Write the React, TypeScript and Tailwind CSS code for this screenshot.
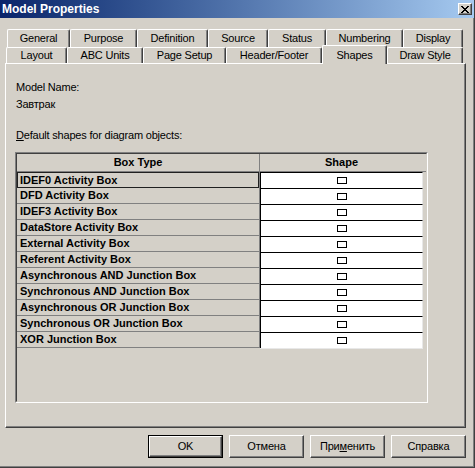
import React from 'react';

const row1 = [
  { label: 'General', w: 63 },
  { label: 'Purpose', w: 67 },
  { label: 'Definition', w: 71 },
  { label: 'Source', w: 60 },
  { label: 'Status', w: 58 },
  { label: 'Numbering', w: 77 },
  { label: 'Display', w: 60 },
];

const row2 = [
  { label: 'Layout', w: 61 },
  { label: 'ABC Units', w: 76 },
  { label: 'Page Setup', w: 83 },
  { label: 'Header/Footer', w: 96 },
  { label: 'Shapes', w: 65, selected: true },
  { label: 'Draw Style', w: 76 },
];

const boxTypes = [
  'IDEF0 Activity Box',
  'DFD Activity Box',
  'IDEF3 Activity Box',
  'DataStore Activity Box',
  'External Activity Box',
  'Referent Activity Box',
  'Asynchronous AND Junction Box',
  'Synchronous AND Junction Box',
  'Asynchronous OR Junction Box',
  'Synchronous OR Junction Box',
  'XOR Junction Box',
];

function Tab({ label, w, selected, h }: { label: string; w: number; selected?: boolean; h: number }) {
  if (selected) {
    return (
      <div
        className="relative z-10 -mt-[2px] h-[19px] flex items-start justify-center pt-[1px] bg-[#d4d0c8] border-t border-l border-white border-r border-r-[#404040] shadow-[inset_-1px_0_#808080] rounded-t-[2px]"
        style={{ width: w }}
      >
        {label}
      </div>
    );
  }
  return (
    <div
      className="flex items-center justify-center bg-[#d4d0c8] border-t border-l border-white border-r border-r-[#404040] shadow-[inset_-1px_0_#808080] rounded-t-[2px]"
      style={{ width: w, height: h }}
    >
      {label}
    </div>
  );
}

function Button({ children, isDefault }: { children: React.ReactNode; isDefault?: boolean }) {
  return (
    <div className={`w-[75px] h-[23px] ${isDefault ? 'border border-black' : ''}`}>
      <div className="w-full h-full flex items-center justify-center border-t border-l border-white border-r border-b border-r-[#404040] border-b-[#404040] shadow-[inset_-1px_-1px_#808080]">
        {children}
      </div>
    </div>
  );
}

export default function App() {
  return (
    <div className="w-[475px] h-[468px] bg-[#d4d0c8] flex flex-col border-r border-b border-[#404040] font-['Liberation_Sans',Arial,sans-serif] text-[11px] tracking-[-0.2px] text-black">
      {/* title bar */}
      <div className="h-[18px] shrink-0 flex items-center justify-between pl-[2px] pr-[2px] bg-linear-to-r from-[#0a246a] to-[#a6caf0]">
        <span className="text-white font-bold text-[12px] leading-none tracking-normal">Model Properties</span>
        <div className="w-[14px] h-[12px] flex items-center justify-center bg-[#d4d0c8] border-t border-l border-white border-r border-b border-r-[#404040] border-b-[#404040] shadow-[inset_-1px_-1px_#808080]">
          <svg width="8" height="7" viewBox="0 0 8 7" shapeRendering="crispEdges">
            <path d="M0 0h2v1h-2zM6 0h2v1h-2zM1 1h2v1h-2zM5 1h2v1h-2zM2 2h4v1h-4zM3 3h2v1h-2zM2 4h4v1h-4zM1 5h2v1h-2zM5 5h2v1h-2zM0 6h2v1h-2zM6 6h2v1h-2z" fill="#000" />
          </svg>
        </div>
      </div>

      <div className="flex-1 flex flex-col border-r border-b border-[#808080]">
        {/* tabs */}
        <div className="pt-[11px]">
          <div className="flex pl-[7px] h-[18px]">
            {row1.map((t) => (
              <Tab key={t.label} label={t.label} w={t.w} h={18} />
            ))}
          </div>
          <div className="flex pl-[6px] h-[16px]">
            {row2.map((t) => (
              <Tab key={t.label} label={t.label} w={t.w} selected={t.selected} h={16} />
            ))}
          </div>
        </div>

        {/* panel */}
        <div className="ml-[5px] w-[461px] h-[365px] border-t border-l border-white border-r border-b border-r-[#404040] border-b-[#404040] shadow-[inset_-1px_-1px_#808080]">
          <div className="ml-[10px] mt-[17px] leading-[13px]">Model Name:</div>
          <div className="ml-[10px] mt-[4px] leading-[13px]">Завтрак</div>
          <div className="ml-[10px] mt-[18px] leading-[13px]">
            <span className="underline">D</span>efault shapes for diagram objects:
          </div>

          {/* grid */}
          <div className="ml-[9px] mt-[10px] w-[413px] h-[251px] border-t border-l border-[#808080] border-r border-b border-r-white border-b-white">
            <div className="w-full h-full border-t border-l border-[#404040] border-r border-b border-r-[#d4d0c8] border-b-[#d4d0c8] font-bold tracking-normal">
              <div className="flex h-[18px] border-b border-[#808080]">
                <div className="w-[243px] border-r border-[#808080] flex items-center justify-center">Box Type</div>
                <div className="w-[163px] flex items-center justify-center">Shape</div>
              </div>
              {boxTypes.map((name, i) => (
                <div key={name} className="flex h-[16px]">
                  <div className="w-[243px] border-r border-b border-[#808080]">
                    {i === 0 ? (
                      <div className="h-[16px] -mb-px border border-[#202020] pl-[2px] leading-[14px]">{name}</div>
                    ) : (
                      <div className="pl-[3px] leading-[15px]">{name}</div>
                    )}
                  </div>
                  <div className="w-[163px] bg-white border-t border-l border-black border-r border-r-[#e8e8e8] flex items-center justify-center">
                    <div className="w-[10px] h-[7px] border border-black" />
                  </div>
                </div>
              ))}
              <div className="ml-[243px] w-[163px] h-px bg-[#e8e8e8]" />
            </div>
          </div>
        </div>

        {/* buttons */}
        <div className="flex justify-end gap-[6px] pr-[7px] mt-[7px]">
          <Button isDefault>OK</Button>
          <Button>Отмена</Button>
          <Button>
            <span>
              При<span className="underline">м</span>енить
            </span>
          </Button>
          <Button>Справка</Button>
        </div>
      </div>
    </div>
  );
}
